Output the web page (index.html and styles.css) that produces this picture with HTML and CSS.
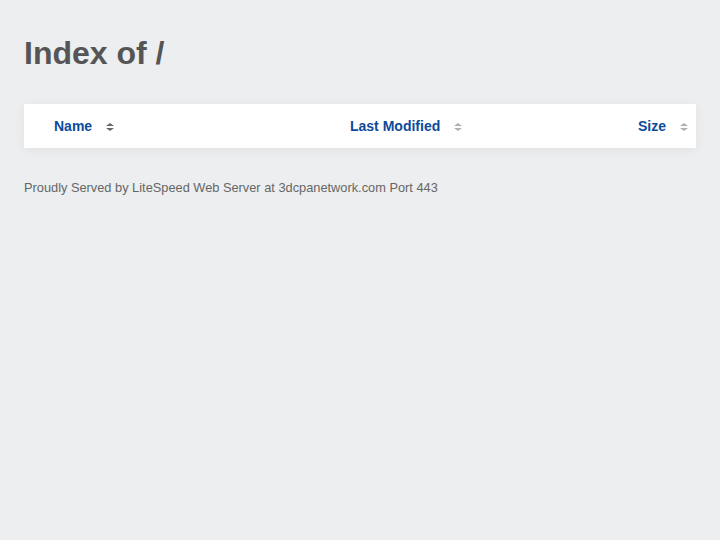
FILE: index.html
```html
<!DOCTYPE html>
<html>
<head>
<meta charset="utf-8">
<title>Index of /</title>
<link rel="stylesheet" href="styles.css">
</head>
<body>
<h1 class="title">Index of /</h1>
<div class="listing">
  <div class="head">
    <div class="col col-name"><span class="label">Name</span><span class="sort active"><i class="up"></i><i class="down"></i></span></div>
    <div class="col col-mod"><span class="label">Last Modified</span><span class="sort"><i class="up"></i><i class="down"></i></span></div>
    <div class="col col-size"><span class="label">Size</span><span class="sort"><i class="up"></i><i class="down"></i></span></div>
  </div>
</div>
<p class="footer">Proudly Served by LiteSpeed Web Server at 3dcpanetwork.com Port 443</p>
</body>
</html>
```
FILE: styles.css
```css
html, body {
  margin: 0;
  padding: 0;
}
body {
  background: #eceeef;
  font-family: "Liberation Sans", Arial, sans-serif;
  padding: 24px;
  color: #555;
}
.title {
  margin: 13px 0 0 0;
  font-size: 32px;
  line-height: 32px;
  font-weight: bold;
  color: #555;
}
.listing {
  margin-top: 35px;
  background: #fff;
  box-shadow: 0 2px 10px rgba(0, 0, 0, 0.06);
}
.head {
  display: grid;
  grid-template-columns: 326px 1fr auto;
  height: 44px;
  align-items: center;
}
.col {
  display: flex;
  align-items: center;
  font-size: 14px;
  font-weight: bold;
  color: #0d4a9c;
}
.col-name {
  padding-left: 30px;
}
.col-size {
  padding-right: 8px;
  justify-content: flex-end;
}
.sort {
  display: flex;
  flex-direction: column;
  align-items: center;
  gap: 2px;
  margin-left: 13px;
  width: 9px;
  padding-top: 2px;
}
.sort i {
  display: block;
  width: 0;
  height: 0;
  border-left: 4px solid transparent;
  border-right: 4px solid transparent;
}
.sort .up {
  border-bottom: 3px solid #b0b0b0;
}
.sort .down {
  border-top: 3px solid #b0b0b0;
}
.sort.active .up {
  border-bottom-color: #666;
}
.sort.active .down {
  border-top-color: #666;
}
.footer {
  margin: 32px 0 0 0;
  font-size: 12.8px;
  line-height: 16px;
  color: #666;
}
```
